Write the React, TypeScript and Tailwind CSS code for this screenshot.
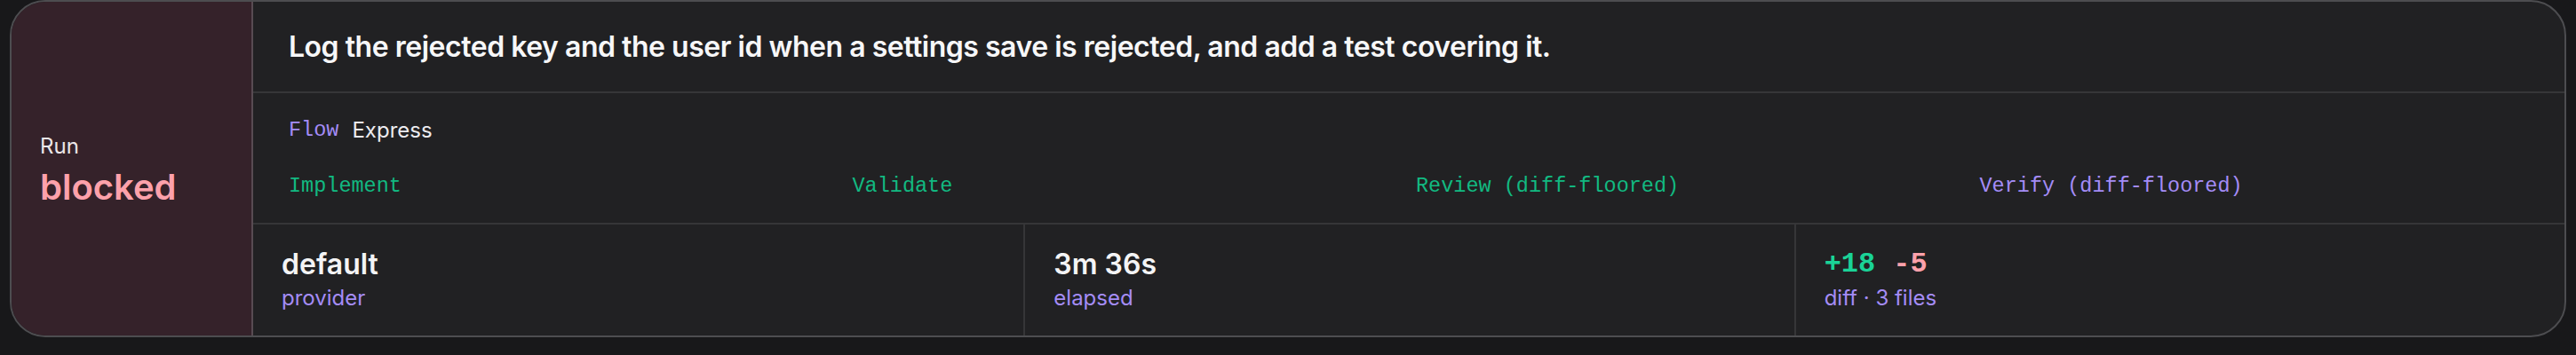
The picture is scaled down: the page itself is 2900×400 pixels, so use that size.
import React from 'react';

const sans = "font-['Inter','Noto_Sans',sans-serif]";
const mono = "font-['Liberation_Mono','DejaVu_Sans_Mono',monospace]";

const stages = [
  { label: 'Implement', tone: 'text-[#12b981]' },
  { label: 'Validate', tone: 'text-[#12b981]' },
  { label: 'Review (diff-floored)', tone: 'text-[#12b981]' },
  { label: 'Verify (diff-floored)', tone: 'text-[#a48cf7]' },
];

const Stat = ({ children, caption, first }: { children: React.ReactNode; caption: string; first?: boolean }) => (
  <div className={`flex flex-col justify-center gap-[2px] px-8 pb-[2px] ${first ? '' : 'border-l-2 border-[#363638]'}`}>
    <div className="text-[32px] leading-10 font-semibold text-[#f4f4f5]">{children}</div>
    <div className="text-[24px] leading-8 text-[#a48cf7]">{caption}</div>
  </div>
);

const App = () => {
  return (
    <div className={`w-[2900px] h-[400px] bg-[#18181a] px-[11px] ${sans}`}>
      <div className="flex h-[380px] rounded-[40px] border-2 border-[#4d4d50] bg-[#212123] overflow-hidden">
        {/* status */}
        <div className="w-[272px] shrink-0 flex flex-col justify-center gap-[6px] pl-8 pt-[4px] bg-[#35222a] border-r-2 border-[#584b52]">
          <div className="text-[24px] leading-8 text-[#ebe6e8]">Run</div>
          <div className="text-[40px] leading-[48px] font-semibold text-[#fda1ab]">blocked</div>
        </div>

        <div className="flex-1 flex flex-col">
          <div className="h-[103px] flex items-center px-10 border-b-2 border-[#363638]">
            <h1 className="text-[32px] font-semibold tracking-[-0.015em] text-[#f7f7f8]">
              Log the rejected key and the user id when a settings save is rejected, and add a test covering it.
            </h1>
          </div>

          <div className="h-[148px] flex flex-col justify-center gap-[31px] px-10 border-b-2 border-[#363638]">
            <div className="flex items-center gap-[15px] leading-8">
              <span className={`${mono} text-[23.5px] text-[#a48cf7]`}>Flow</span>
              <span className="text-[24px] text-[#ecebef]">Express</span>
            </div>
            <div className="grid grid-cols-4 gap-4 leading-8">
              {stages.map((s) => (
                <span key={s.label} className={`${mono} text-[23.5px] ${s.tone}`}>
                  {s.label}
                </span>
              ))}
            </div>
          </div>

          <div className="flex-1 grid grid-cols-3">
            <Stat first caption="provider">default</Stat>
            <Stat caption="elapsed">3m 36s</Stat>
            <Stat caption="diff · 3 files">
              <span className={`${mono} font-bold flex gap-[20px] text-[32px]`}>
                <span className="text-[#1ad397]">+18</span>
                <span className="text-[#fda1ab]">-5</span>
              </span>
            </Stat>
          </div>
        </div>
      </div>
    </div>
  );
};

export default App;
